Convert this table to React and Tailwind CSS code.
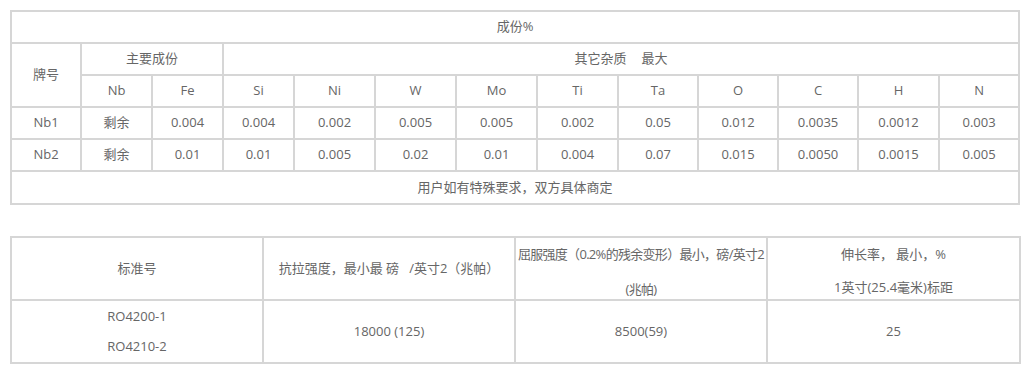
const elements = ['Si', 'Ni', 'W', 'Mo', 'Ti', 'Ta', 'O', 'C', 'H', 'N'];

const grades = [
  { name: 'Nb1', values: ['剩余', '0.004', '0.004', '0.002', '0.005', '0.005', '0.002', '0.05', '0.012', '0.0035', '0.0012', '0.003'] },
  { name: 'Nb2', values: ['剩余', '0.01', '0.01', '0.005', '0.02', '0.01', '0.004', '0.07', '0.015', '0.0050', '0.0015', '0.005'] },
];

const widths = [70, 71, 71, 71, 81, 81, 81, 81, 80, 80, 80, 81, 80];

const cell = 'border border-[#d6d6d6] text-center align-middle h-[32px] p-0';
const big = 'border border-[#d6d6d6] text-center align-middle h-[63px] p-0';

export default function App() {
  return (
    <div
      className="w-[1024px] h-[369px] bg-white text-[13px] text-[#666] pl-[10px] pt-[10px]"
      style={{ fontFamily: '"Open Sans", "Noto Sans CJK SC", sans-serif' }}
    >
      {/* Composition table */}
      <table className="table-fixed border-separate border-spacing-0 border border-[#d6d6d6] w-[1009px]">
        <colgroup>
          {widths.map((w, i) => (
            <col key={i} style={{ width: w }} />
          ))}
        </colgroup>
        <tbody>
          <tr>
            <td colSpan={13} className={cell}>成份%</td>
          </tr>
          <tr>
            <td rowSpan={2} className={cell}>牌号</td>
            <td colSpan={2} className={cell}>主要成份</td>
            <td colSpan={10} className={cell}>
              其它杂质<span className="inline-block w-[15px]" />最大
            </td>
          </tr>
          <tr>
            <td className={cell}>Nb</td>
            <td className={cell}>Fe</td>
            {elements.map((el) => (
              <td key={el} className={cell}>{el}</td>
            ))}
          </tr>
          {grades.map((g) => (
            <tr key={g.name}>
              <td className={cell}>{g.name}</td>
              {g.values.map((v, i) => (
                <td key={i} className={cell}>{v}</td>
              ))}
            </tr>
          ))}
          <tr>
            <td colSpan={13} className={`${cell} h-[33px]`}>用户如有特殊要求，双方具体商定</td>
          </tr>
        </tbody>
      </table>

      {/* Mechanical properties table */}
      <table className="table-fixed border-separate border-spacing-0 border border-[#d6d6d6] w-[1009px] mt-[31px]">
        <colgroup>
          <col style={{ width: 252 }} />
          <col style={{ width: 252 }} />
          <col style={{ width: 252 }} />
          <col style={{ width: 253 }} />
        </colgroup>
        <tbody>
          <tr>
            <td className={big}>标准号</td>
            <td className={big}>抗拉强度，最小最 磅&nbsp;&nbsp; /英寸2（兆帕）</td>
            <td className={big}>
              <div className="h-[61px] leading-[32px] whitespace-nowrap tracking-[-0.7px]">
                <div>屈服强度（0.2%的残余变形）最小，磅/英寸2</div>
                <div className="mt-[3px]">(兆帕)</div>
              </div>
            </td>
            <td className={big}>
              <div className="h-[61px] leading-[32px]">
                <div>伸长率， 最小，%</div>
                <div className="mt-[1px]">1英寸(25.4毫米)标距</div>
              </div>
            </td>
          </tr>
          <tr>
            <td className={big}>
              <div className="h-[61px] leading-[30px]">
                <div>RO4200-1</div>
                <div>RO4210-2</div>
              </div>
            </td>
            <td className={big}>18000 (125)</td>
            <td className={big}>8500(59)</td>
            <td className={big}>25</td>
          </tr>
        </tbody>
      </table>
    </div>
  );
}
